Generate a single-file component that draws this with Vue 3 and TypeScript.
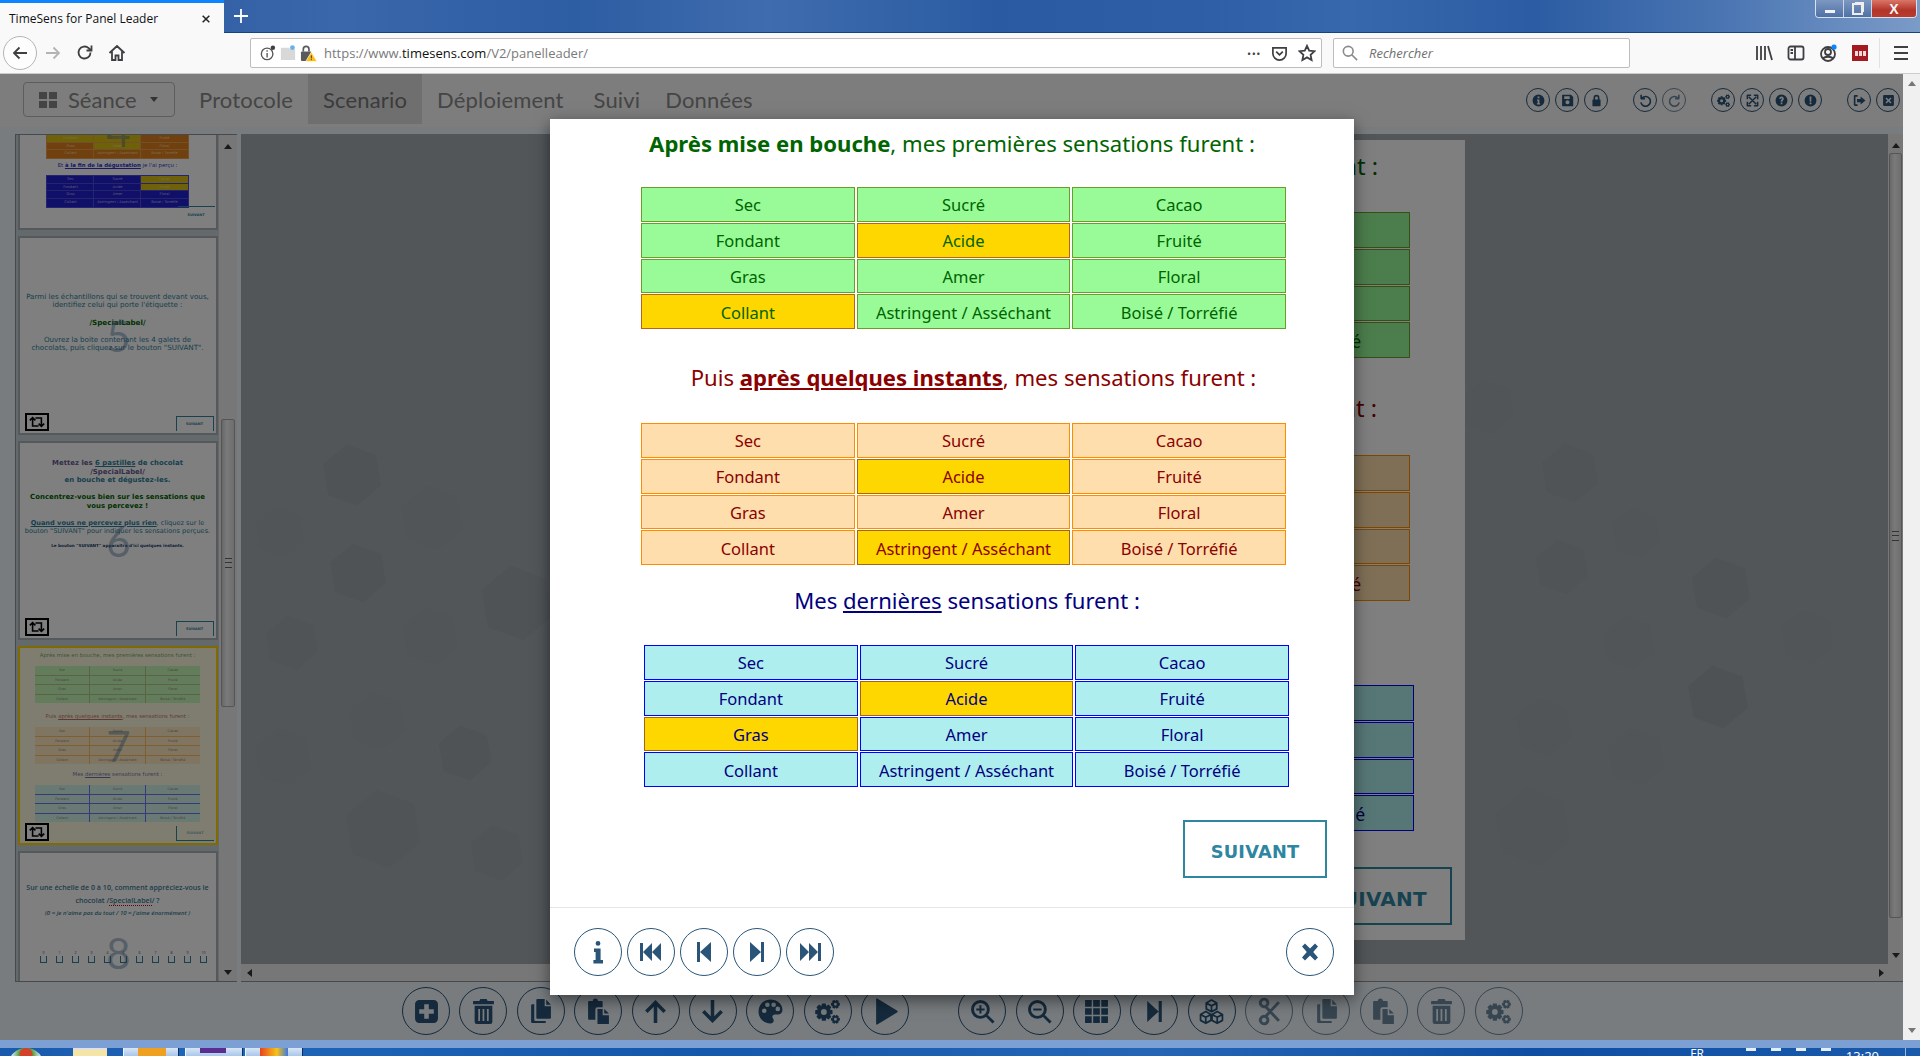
<script setup lang="ts">
type Icon = { d: string; stroke?: number }
type Theme = 'green' | 'peach' | 'blue'
type Tool = { icon: string; off?: boolean }

// roue dentée pour l'icône "cogs"
function gear(cx: number, cy: number, ro: number, ri: number, hole: number, n: number): string {
  const pts: string[] = []
  for (let i = 0; i < n; i++) {
    const a = (i / n) * Math.PI * 2
    const w = Math.PI / n
    const corners: [number, number][] = [
      [ri, a - w], [ro, a - w * 0.55], [ro, a + w * 0.55]
    ]
    corners.forEach(([r, t]) => {
      pts.push(`${(cx + r * Math.cos(t)).toFixed(2)} ${(cy + r * Math.sin(t)).toFixed(2)}`)
    })
  }
  return `M${pts.join('L')}Z M${cx - hole} ${cy}a${hole} ${hole} 0 1 0 ${hole * 2} 0a${hole} ${hole} 0 1 0 ${-hole * 2} 0Z`
}

const disc = 'M12 1a11 11 0 1 1 0 22a11 11 0 0 1 0-22Z '
const cogs = gear(8.5, 12.5, 8.5, 6.2, 2.8, 8) + ' ' + gear(19.6, 5, 4.4, 3.2, 1.4, 6) + ' ' + gear(19.6, 19.5, 4.4, 3.2, 1.4, 6)

const icons: Record<string, Icon> = {
  info: { d: 'M9.6 3.4a2.4 2.4 0 1 1 4.8 0a2.4 2.4 0 0 1-4.8 0Z M8 8.5h6.6v11.5H17v3.5H7.4V20h2.2v-8H8Z' },
  first: { d: 'M1 3h3v18H1Z M4 12l9-9v18Z M13 12l9-9v18Z' },
  prev: { d: 'M5 2h3v20H5Z M8 12 19 2v20Z' },
  next: { d: 'M5 2l11 10L5 22Z M16 2h3v20h-3Z' },
  last: { d: 'M2 3l9 9-9 9Z M11 3l9 9-9 9Z M20 3h3v18h-3Z' },
  close: { d: 'M4 6.5 7 3.5 12 8.5 17 3.5 20 6.5 15.2 12 20 17.5 17 20.5 12 15.5 7 20.5 4 17.5 8.8 12Z' },
  plusSquare: { d: 'M5 1h14a4 4 0 0 1 4 4v14a4 4 0 0 1-4 4H5a4 4 0 0 1-4-4V5a4 4 0 0 1 4-4Z M9.8 5v4.8H5v4.4h4.8V19h4.4v-4.8H19V9.8h-4.8V5Z' },
  trash: { d: 'M9 0h6l1 2h6v3H2V2h6Z M3.5 6.5h17V22a2 2 0 0 1-2 2h-13a2 2 0 0 1-2-2Z M7 9.5V21h1.7V9.5Z M11.1 9.5V21h1.7V9.5Z M15.3 9.5V21H17V9.5Z' },
  copy: { d: 'M9 0h7v7h6v11a1 1 0 0 1-1 1H9a1 1 0 0 1-1-1V1a1 1 0 0 1 1-1Z M17.5 .5 22 5.5h-4.5Z M6 5v15a1 1 0 0 0 1 1h10v2H4a1 1 0 0 1-1-1V6a1 1 0 0 1 1-1Z' },
  paste: { d: 'M3 2h3.5a2.5 2.5 0 0 1 5 0H15a1 1 0 0 1 1 1v5h-5a2 2 0 0 0-2 2v10H3a1 1 0 0 1-1-1V3a1 1 0 0 1 1-1Z M11 9.5h5v6h6V24H11Z M17.5 9.5 22 14h-4.5Z' },
  up: { d: 'M12 1 22 11 19.6 13.4 13.7 7.5V23h-3.4V7.5L4.4 13.4 2 11Z' },
  down: { d: 'M12 23 2 13 4.4 10.6 10.3 16.5V1h3.4v15.5l5.9-5.9L22 13Z' },
  palette: { d: 'M12 .5C5.2.5 .5 5.5 .5 12S5.6 23.500 12 23.500c2 0 3.100-1.200 3.100-2.800 0-1.800-1.300-2.200-1.300-3.600 0-1.300 1-2.200 2.500-2.200H19c2.700 0 4.500-1.800 4.500-4.300C23.500 4.600 18.300.5 12 .5Z M6 13.500a2.200 2.200 0 1 1 0-4.400 2.200 2.200 0 0 1 0 4.400Z M9 7.700a2.200 2.200 0 1 1 0-4.400 2.200 2.200 0 0 1 0 4.400Z M15 7.700a2.200 2.200 0 1 1 0-4.400 2.200 2.200 0 0 1 0 4.400Z M19 11.700a2.200 2.200 0 1 1 0-4.400 2.200 2.200 0 0 1 0 4.400Z' },
  cogs: { d: cogs },
  play: { d: 'M3 0a1 1 0 0 1 1.500-.3L23 11a1.200 1.200 0 0 1 0 2L4.500 24.300A1 1 0 0 1 3 24Z' },
  zoomIn: { d: 'M10 1a9 9 0 1 1 0 18a9 9 0 0 1 0-18Z M10 3.800a6.200 6.200 0 1 0 0 12.400a6.200 6.200 0 0 0 0-12.400Z M17.200 15.400 23.600 21.600 21.600 23.600 15.400 17.200Z M9 6h2v3h3v2h-3v3H9v-3H6V9h3Z' },
  zoomOut: { d: 'M10 1a9 9 0 1 1 0 18a9 9 0 0 1 0-18Z M10 3.800a6.200 6.200 0 1 0 0 12.400a6.200 6.200 0 0 0 0-12.400Z M17.200 15.400 23.600 21.600 21.600 23.600 15.400 17.200Z M6 9h8v2H6Z' },
  grid: { d: 'M1 1h6.400v6.400H1Z M8.800 1h6.400v6.400H8.800Z M16.600 1H23v6.400h-6.400Z M1 8.800h6.400v6.400H1Z M8.800 8.800h6.400v6.400H8.800Z M16.600 8.800H23v6.400h-6.400Z M1 16.600h6.400V23H1Z M8.800 16.600h6.400V23H8.800Z M16.600 16.600H23V23h-6.400Z' },
  cubes: { d: 'M12 1 17 3.800V9.500L12 12.300 7 9.500V3.800Z M7 3.800 12 6.600 17 3.800 M12 6.600V12.300 M6.500 12 11.500 14.800V20.500L6.500 23.300 1.500 20.500V14.800Z M1.500 14.800 6.500 17.600 11.500 14.800 M6.500 17.600V23.300 M17.500 12 22.500 14.800V20.500L17.500 23.300 12.500 20.500V14.800Z M12.500 14.800 17.500 17.600 22.500 14.800 M17.500 17.600V23.300', stroke: 1.7 },
  scissors: { d: 'M4 1.500a3.600 3.600 0 1 1 4.500 5.400A3.600 3.600 0 0 1 4 1.500Z M4 22.500a3.600 3.600 0 1 0 4.500-5.400A3.600 3.600 0 0 0 4 22.500Z M8 7 21 21 M8 17 21 3', stroke: 2.8 },
  infoDisc: { d: disc + 'M10.300 4.800h3.400V8h-3.400Z M9.300 10h4.400v7h1.300v2.400H9v-2.400h1.400v-4.600H9.300Z' },
  save: { d: 'M3 1.500h15.500L22.500 5.500V21.500a1 1 0 0 1-1 1H3a1 1 0 0 1-1-1V2.500a1 1 0 0 1 1-1Z M6 4v5h10V4Z M12 11.500a3.800 3.800 0 1 0 0 7.600a3.800 3.800 0 0 0 0-7.600Z' },
  lock: { d: 'M6.500 10V7a5.500 5.500 0 0 1 11 0v3h1a1 1 0 0 1 1 1v10.500a1 1 0 0 1-1 1h-13a1 1 0 0 1-1-1V11a1 1 0 0 1 1-1Z M9.500 10h5V7a2.500 2.500 0 0 0-5 0Z' },
  undo: { d: 'M5.500 7.500A9 9 0 1 1 3.400 15.500 M4 1.500V8.500H11', stroke: 3 },
  redo: { d: 'M18.500 7.500A9 9 0 1 0 20.600 15.500 M20 1.500V8.500H13', stroke: 3 },
  expand: { d: 'M5 5 19 19 M19 5 5 19 M2.500 9.500V2.500H9.500 M14.500 2.500H21.500V9.500 M21.500 14.500V21.500H14.500 M9.500 21.500H2.500V14.500', stroke: 2.8 },
  question: { d: disc + 'M7.800 9a4.200 4.200 0 0 1 8.400 0c0 2.500-2.600 2.900-2.600 4.700v.5h-3.100v-1c0-2.600 2.500-3 2.500-4.300a1 1 0 0 0-2.100 0Z M10.500 15.800h3.100v3h-3.100Z' },
  alert: { d: disc + 'M10.200 4.800h3.600l-.5 9.400h-2.600Z M10.300 15.600h3.400v3.300h-3.400Z' },
  signOut: { d: 'M1.500 4a2 2 0 0 1 2-2h5v3.200h-4v13.600h4V22h-5a2 2 0 0 1-2-2Z M14 4.500 23 12l-9 7.500v-4.500H7.500V9H14Z' },
  closeSquare: { d: 'M4 2h16a2 2 0 0 1 2 2v16a2 2 0 0 1-2 2H4a2 2 0 0 1-2-2V4a2 2 0 0 1 2-2Z M8.500 6.500 6.500 8.500 10 12 6.500 15.500 8.500 17.500 12 14 15.500 17.500 17.500 15.500 14 12 17.500 8.500 15.500 6.500 12 10Z' }
}

const navItems = ['Protocole', 'Scenario', 'Déploiement', 'Suivi', 'Données']
const navTools: Tool[][] = [
  [{ icon: 'infoDisc' }, { icon: 'save' }, { icon: 'lock' }],
  [{ icon: 'undo' }, { icon: 'redo', off: true }],
  [{ icon: 'cogs' }, { icon: 'expand' }, { icon: 'question' }, { icon: 'alert' }],
  [{ icon: 'signOut' }, { icon: 'closeSquare' }]
]
const bottomTools: Tool[][] = [
  ['plusSquare', 'trash', 'copy', 'paste', 'up', 'down', 'palette', 'cogs', 'play'].map((icon) => ({ icon })),
  [
    { icon: 'zoomIn' }, { icon: 'zoomOut' }, { icon: 'grid' }, { icon: 'next' }, { icon: 'cubes' },
    { icon: 'scissors', off: true }, { icon: 'copy', off: true }, { icon: 'paste', off: true },
    { icon: 'trash', off: true }, { icon: 'cogs', off: true }
  ]
]

const words = ['Sec', 'Sucré', 'Cacao', 'Fondant', 'Acide', 'Fruité', 'Gras', 'Amer', 'Floral', 'Collant', 'Astringent / Asséchant', 'Boisé / Torréfié']

const sections: { theme: Theme; picked: number[] }[] = [
  { theme: 'green', picked: [4, 9] },
  { theme: 'peach', picked: [4, 10] },
  { theme: 'blue', picked: [4, 6] }
]

// galets à peine visibles dans le fond de la scène : x, y, rayon, opacité
const shapes = [
  [352, 475, 31, .03], [280, 532, 26, .006], [432, 518, 33, .008], [358, 573, 30, .025], [292, 643, 28, .012],
  [430, 636, 30, .008], [517, 603, 38, .025], [377, 721, 30, .006], [283, 757, 30, .006], [465, 753, 28, .03],
  [383, 829, 40, .012], [497, 853, 28, .02], [1488, 407, 28, .006], [1570, 473, 30, .02], [1636, 533, 26, .008],
  [1562, 567, 28, .016], [1721, 588, 31, .03], [1807, 637, 28, .008], [1629, 643, 28, .008], [1718, 697, 32, .035],
  [1544, 727, 30, .008], [1636, 757, 30, .006], [1533, 827, 40, .008]
]
const hexPoints = (x: number, y: number, r: number) =>
  Array.from({ length: 6 }, (_, i) => {
    const a = (i / 6) * Math.PI * 2 + 0.35
    return `${(x - 241 + r * Math.cos(a)).toFixed(1)},${(y - 134 + r * Math.sin(a)).toFixed(1)}`
  }).join(' ')

const scale = [0, 1, 2, 3, 4, 5, 6, 7, 8, 9, 10]
</script>

<template>
  <div class="screen">
    <header class="titlebar">
      <div class="tab">
        <span class="tab-title">TimeSens for Panel Leader</span>
        <svg class="tab-x" viewBox="0 0 12 12"><path d="M2 2 10 10M10 2 2 10" /></svg>
      </div>
      <svg class="new-tab" viewBox="0 0 14 14"><path d="M7 0v14M0 7h14" /></svg>
      <div class="win-btns">
        <span class="win-btn win-min"><i /></span>
        <span class="win-btn win-max"><i /></span>
        <span class="win-btn win-close">X</span>
      </div>
    </header>

    <div class="toolbar">
      <span class="round-back">
        <svg viewBox="0 0 18 18" class="tb-icon"><path d="M16 9H3M8.500 3.500 3 9l5.500 5.500" /></svg>
      </span>
      <svg viewBox="0 0 18 18" class="tb-icon tb-forward"><path d="M2 9h13M9.500 3.500 15 9l-5.500 5.500" /></svg>
      <svg viewBox="0 0 18 18" class="tb-icon tb-reload"><path d="M14.500 8.500a6 6 0 1 1-1.800-4.300L15 6.500M15.500 1.500v5h-5" /></svg>
      <svg viewBox="0 0 18 18" class="tb-icon tb-home"><path d="M1.500 9 9 2l7.500 7M4 7.500V16h3.500v-4.500h3V16H14V7.500" /></svg>

      <div class="urlbar">
        <svg viewBox="0 0 18 18" class="tb-icon url-info"><circle cx="8" cy="10" r="6.500" /><path d="M8 9v5M8 6v1.500" /><circle class="dot-dark" cx="14.500" cy="3" r="2.500" /></svg>
        <svg viewBox="0 0 18 18" class="url-track"><path d="M1 3h9l2 2h5v12H1Z" /><circle cx="14" cy="3" r="2.700" /></svg>
        <svg viewBox="0 0 18 18" class="url-lock">
          <rect x="1" y="7" width="11" height="10" rx="1" fill="#5a5a5a" />
          <path d="M3.500 7V4.500a3 3 0 0 1 6 0V7" fill="none" stroke="#5a5a5a" stroke-width="1.800" />
          <path d="M12 7.500 18 17.500H6Z" fill="#fdbd12" stroke="#fff" stroke-width=".7" />
          <path d="M12 11v3.200M12 15v1" stroke="#333" stroke-width="1" />
        </svg>
        <span class="url-text">https://www.<b>timesens.com</b>/V2/panelleader/</span>
        <span class="url-dots">•••</span>
        <svg viewBox="0 0 18 18" class="tb-icon url-pocket"><path d="M2 3h14v6a7 7 0 0 1-14 0ZM5.500 7 9 10.500 12.500 7" /></svg>
        <svg viewBox="0 0 18 18" class="tb-icon url-star"><path d="M9 1.800 11.200 6.600 16.500 7.200 12.600 10.800 13.600 16 9 13.400 4.400 16 5.400 10.800 1.500 7.200 6.800 6.600Z" /></svg>
      </div>

      <div class="searchbar">
        <svg viewBox="0 0 18 18" class="search-glass"><circle cx="7" cy="7" r="5.500" /><path d="M11 11l6 6" /></svg>
        <span>Rechercher</span>
      </div>

      <svg viewBox="0 0 18 18" class="tb-icon tb-lib"><path d="M2 2v14M6 2v14M10 2v14M13 2l4 14" /></svg>
      <svg viewBox="0 0 18 18" class="tb-icon tb-side"><rect x="1.500" y="2.500" width="15" height="13" rx="2" /><path d="M8 2.500v13M3.500 6H6M3.500 9H6" /></svg>
      <svg viewBox="0 0 18 18" class="tb-icon tb-acc"><circle cx="9" cy="10" r="7" /><circle cx="9" cy="8" r="3" /><path d="M4 15c1-3 9-3 10 0" /><circle class="dot-blue" cx="15" cy="3" r="2.600" /></svg>
      <span class="tb-ext"><i /><i /><i /></span>
      <span class="tb-sep" />
      <svg viewBox="0 0 18 18" class="tb-icon tb-menu"><path d="M2 3h14M2 9h14M2 15h14" /></svg>
    </div>

    <div class="viewport">
      <div class="page">
        <nav class="nav">
          <div class="session">
            <span class="session-grid"><i /><i /><i /><i /></span>
            <span>Séance</span>
            <i class="caret" />
          </div>
          <a v-for="item in navItems" :key="item" class="nav-item" :class="{ 'nav-item--on': item === 'Scenario' }">{{ item }}</a>
          <div class="nav-tools">
            <div v-for="(group, g) in navTools" :key="g" class="nav-group">
              <span v-for="tool in group" :key="tool.icon" class="circle circle--sm" :class="{ 'circle--off': tool.off }">
                <svg viewBox="0 0 24 24" :class="{ lined: icons[tool.icon].stroke }" :stroke-width="icons[tool.icon].stroke"><path :d="icons[tool.icon].d" /></svg>
              </span>
            </div>
          </div>
        </nav>

        <main class="work">
          <aside class="slides">
            <div class="slides-list">
              <div class="slides-inner">
                <section class="thumb thumb--four">
                  <div class="mini mini--orange">
                    <span v-for="(w, i) in words.slice(3)" :key="w" :class="{ gold: [0, 1, 4].includes(i) }">{{ w }}</span>
                  </div>
                  <p class="t-head t-blue">Et <b><u>à la fin de la dégustation</u></b> je l'ai perçu :</p>
                  <div class="mini mini--navy">
                    <span v-for="(w, i) in words" :key="w" :class="{ gold: [2, 5].includes(i) }">{{ w }}</span>
                  </div>
                  <span class="t-next t-next--open">SUIVANT</span>
                  <em class="big">4</em>
                </section>

                <section class="thumb thumb--five">
                  <p class="t-text">Parmi les échantillons qui se trouvent devant vous,<br />identifiez celui qui porte l'étiquette :</p>
                  <p class="t-text t-label">/SpecialLabel/</p>
                  <p class="t-text">Ouvrez la boite contenant les 4 galets de<br />chocolats, puis cliquez sur le bouton "SUIVANT".</p>
                  <span class="t-repeat"><svg viewBox="0 0 20 14"><path d="M1 5 4.500 1.500 8 5M4.500 2v10H12M19 9l-3.500 3.500L12 9M15.500 12V2H8" /></svg></span>
                  <span class="t-next">SUIVANT</span>
                  <em class="big">5</em>
                </section>

                <section class="thumb thumb--six">
                  <p class="t-text t-strong"><span class="t-plum">Mettez les</span> <u>6 pastilles</u> de chocolat<br /><span class="t-plum">/SpecialLabel/</span><br />en bouche et dégustez-les.</p>
                  <p class="t-text t-strong t-green t-gap">Concentrez-vous bien sur les sensations que<br />vous percevez !</p>
                  <p class="t-text t-gap t-tight"><b><u>Quand vous ne percevez plus rien</u></b>, cliquez sur le<br />bouton "SUIVANT" pour indiquer les sensations perçues.</p>
                  <p class="t-note">Le bouton "SUIVANT" apparaîtra d'ici quelques instants.</p>
                  <span class="t-repeat"><svg viewBox="0 0 20 14"><path d="M1 5 4.500 1.500 8 5M4.500 2v10H12M19 9l-3.500 3.500L12 9M15.500 12V2H8" /></svg></span>
                  <span class="t-next">SUIVANT</span>
                  <em class="big">6</em>
                </section>

                <section class="thumb thumb--seven">
                  <div class="seven-body">
                    <p class="s-head s-head--green">Après mise en bouche, mes premières sensations furent :</p>
                    <div class="mini mini--seven mini--green"><span v-for="w in words" :key="w">{{ w }}</span></div>
                    <p class="s-head s-head--red">Puis <u>après quelques instants</u>, mes sensations furent :</p>
                    <div class="mini mini--seven mini--peach"><span v-for="w in words" :key="w">{{ w }}</span></div>
                    <p class="s-head s-head--blue">Mes <u>dernières</u> sensations furent :</p>
                    <div class="mini mini--seven mini--aqua"><span v-for="w in words" :key="w">{{ w }}</span></div>
                  </div>
                  <span class="t-repeat"><svg viewBox="0 0 20 14"><path d="M1 5 4.500 1.500 8 5M4.500 2v10H12M19 9l-3.500 3.500L12 9M15.500 12V2H8" /></svg></span>
                  <span class="t-next t-next--low">SUIVANT</span>
                  <em class="big">7</em>
                </section>

                <section class="thumb thumb--eight">
                  <p class="t-sans">Sur une échelle de 0 à 10, comment appréciez-vous le<br />chocolat /<span class="squiggle">SpecialLabel</span>/ ?</p>
                  <p class="t-sans-note">(0 = je n'aime pas du tout / 10 = j'aime énormément )</p>
                  <div class="rating">
                    <div v-for="n in scale" :key="n" class="rating-item"><small>{{ n }}</small><i /></div>
                  </div>
                  <em class="big">8</em>
                </section>
              </div>
            </div>
            <div class="vbar vbar--slides">
              <i class="arr arr--up" />
              <span class="vthumb"><b /></span>
              <i class="arr arr--down" />
            </div>
          </aside>

          <div class="stage">
            <div class="stage-row">
              <div class="canvas">
                <svg class="bg-shapes" width="1647" height="830">
                  <polygon v-for="(s, i) in shapes" :key="i" :points="hexPoints(s[0], s[1], s[2])" :fill-opacity="s[3]" />
                </svg>
                <div class="slide">
                  <template v-for="(sec, si) in sections" :key="sec.theme">
                    <h2 class="slide-title" :class="[`title-${sec.theme}`, `slide-title--${si}`]">
                      <template v-if="si === 0"><b>Après mise en bouche</b>, mes premières sensations furent :</template>
                      <template v-else-if="si === 1">Puis <b><u>après quelques instants</u></b>, mes sensations furent :</template>
                      <template v-else>Mes <u>dernières</u> sensations furent :</template>
                    </h2>
                    <div class="cells cells--stage" :class="[`cells--${sec.theme}`, `cells--stage${si}`]">
                      <span v-for="(w, i) in words" :key="w" class="cell" :class="{ 'cell--on': sec.picked.includes(i) }">{{ w }}</span>
                    </div>
                  </template>
                  <div class="next-wrap next-wrap--stage"><button type="button" class="next next--stage">SUIVANT</button></div>
                </div>
              </div>
              <div class="vbar vbar--stage">
                <i class="arr arr--up" />
                <span class="vthumb vthumb--stage"><b /></span>
                <i class="arr arr--down" />
              </div>
            </div>
            <div class="hbar"><i class="arr arr--left" /><i class="arr arr--right" /></div>
          </div>
        </main>

        <footer class="tools">
          <div v-for="(group, g) in bottomTools" :key="g" class="tools-group">
            <span v-for="tool in group" :key="tool.icon + g" class="circle" :class="{ 'circle--off': tool.off }">
              <svg viewBox="0 0 24 24" :class="{ lined: icons[tool.icon].stroke }" :stroke-width="icons[tool.icon].stroke"><path :d="icons[tool.icon].d" /></svg>
            </span>
          </div>
        </footer>

        <div class="backdrop">
          <div class="modal">
            <div class="modal-body">
              <template v-for="(sec, si) in sections" :key="sec.theme">
                <h2 class="title" :class="[`title-${sec.theme}`, `title--${si}`]">
                  <template v-if="si === 0"><b>Après mise en bouche</b>, mes premières sensations furent :</template>
                  <template v-else-if="si === 1">Puis <b><u>après quelques instants</u></b>, mes sensations furent :</template>
                  <template v-else>Mes <u>dernières</u> sensations furent :</template>
                </h2>
                <div class="cells" :class="[`cells--${sec.theme}`, `cells--m${si}`]">
                  <span v-for="(w, i) in words" :key="w" class="cell" :class="{ 'cell--on': sec.picked.includes(i) }">{{ w }}</span>
                </div>
              </template>
              <div class="next-wrap"><button type="button" class="next">SUIVANT</button></div>
            </div>
            <div class="modal-foot">
              <div class="foot-left">
                <span v-for="name in ['info', 'first', 'prev', 'next', 'last']" :key="name" class="circle circle--light">
                  <svg viewBox="0 0 24 24"><path :d="icons[name].d" /></svg>
                </span>
              </div>
              <span class="circle circle--light">
                <svg viewBox="0 0 24 24"><path :d="icons.close.d" /></svg>
              </span>
            </div>
          </div>
        </div>
      </div>

      <div class="page-scroll">
        <i class="arr arr--up arr--page" />
        <i class="arr arr--down arr--page" />
      </div>
    </div>

    <div class="strip" />
    <div class="taskbar">
      <span class="orb" />
      <span class="task task--folder"><i /></span>
      <span class="task task--box task--one"><i /></span>
      <span class="task task--box task--two"><i /></span>
      <span class="task task--box task--three"><i /></span>
      <span class="tray">
        <span class="tray-lang">FR</span>
        <i /><i /><i /><i />
        <span class="clock">13:20</span>
      </span>
      <span class="show-desktop" />
    </div>
  </div>
</template>

<style>
html, body { margin: 0; height: 100%; overflow: hidden; background: #fff; }
</style>

<style scoped>
.screen { width: 1920px; height: 1056px; overflow: hidden; display: flex; flex-direction: column; font-family: "Open Sans", "Liberation Sans", sans-serif; }
p, h2 { margin: 0; font-weight: normal; }

/* ---- barre de titre ---- */
.titlebar { height: 33px; flex: none; display: flex; box-sizing: border-box; border-bottom: 1px solid #17437f; background: linear-gradient(90deg, #2a5aa0 0, #3a66ab 18%, #2d5da3 30%, #3f6cae 40%, #2a5ba2 52%, #2d5ea6 62%, #3768ad 70%, #2c5ca3 80%, #4b76b3 90%, #7b9bc8 100%); }
.tab { width: 224px; height: 33px; box-sizing: border-box; background: #f9f9fa; border-top: 3px solid #0a84ff; display: flex; align-items: center; font-size: 12px; color: #111; padding-left: 9px; }
.tab-title { width: 192px; font-family: "Open Sans", sans-serif; font-size: 12px; }
.tab-x { width: 10px; height: 10px; margin-top: 1px; }
.tab-x path { stroke: #222; stroke-width: 1.800; fill: none; }
.new-tab { width: 14px; height: 14px; margin: 9px 0 0 10px; }
.new-tab path { stroke: #fff; stroke-width: 1.800; fill: none; }
.win-btns { margin-left: auto; margin-right: 3px; display: flex; height: 18px; border: 1px solid #d6e0ee; border-top: none; border-radius: 0 0 4px 4px; overflow: hidden; box-sizing: border-box; width: 102px; }
.win-btn { display: flex; align-items: center; justify-content: center; border-right: 1px solid #c9d4e6; }
.win-min { width: 27px; background: linear-gradient(#7d98c1, #4f71a5); }
.win-min i { width: 10px; height: 3px; margin-top: 5px; background: #f2f2f2; }
.win-max { width: 27px; background: linear-gradient(#7d98c1, #4f71a5); }
.win-max i { width: 7px; height: 8px; border: 2px solid #eee; box-shadow: 2px -2px 0 -1px #eee; }
.win-close { flex: 1; border: none; background: linear-gradient(#d97667, #b3342a 60%, #b93a2e); color: #f4f4f4; font: bold 14px "Liberation Sans", sans-serif; }

/* ---- barre d'outils navigateur ---- */
.toolbar { height: 41px; flex: none; display: flex; align-items: center; box-sizing: border-box; background: #f9f9fa; border-bottom: 1px solid #ccc; }
.tb-icon { width: 18px; height: 18px; flex: none; }
.tb-icon path, .tb-icon circle, .tb-icon rect { fill: none; stroke: #3f3f41; stroke-width: 1.800; }
.tb-icon .dot-dark { fill: #3f3f41; stroke: none; }
.tb-icon .dot-blue { fill: #0a84ff; stroke: none; }
.round-back { width: 34px; height: 34px; margin-left: 3px; border: 1px solid #b5b5b5; border-radius: 50%; box-sizing: border-box; display: flex; align-items: center; justify-content: center; background: #fdfdfd; }
.tb-forward { margin-left: 7px; }
.tb-forward path { stroke: #b4b4b4; }
.tb-reload { margin-left: 14px; }
.tb-home { margin-left: 14px; }
.urlbar { width: 1072px; height: 30px; margin-left: 124px; box-sizing: border-box; border: 1px solid #bdbdbd; border-radius: 2px; background: #fff; display: flex; align-items: center; flex: none; }
.url-info { margin-left: 9px; width: 16px; height: 16px; }
.url-info path, .url-info circle { stroke-width: 1.500; stroke: #555; }
.url-track { width: 16px; height: 16px; margin-left: 4px; }
.url-track path { fill: #d8d8d8; }
.url-track circle { fill: #6bb0ea; }
.url-lock { width: 17px; height: 17px; margin-left: 4px; }
.url-text { margin-left: 7px; font-size: 13px; color: #7a7a7a; white-space: nowrap; }
.url-text b { font-weight: normal; color: #111; }
.url-dots { margin-left: auto; font-size: 11px; letter-spacing: .5px; color: #444; }
.url-pocket { margin-left: 10px; width: 17px; height: 17px; }
.url-star { margin-left: 10px; margin-right: 5px; width: 18px; height: 18px; }
.searchbar { width: 297px; height: 30px; margin-left: 11px; box-sizing: border-box; border: 1px solid #bdbdbd; border-radius: 2px; background: #fff; display: flex; align-items: center; font-size: 13px; font-style: italic; color: #707070; flex: none; }
.search-glass { width: 16px; height: 16px; margin: 0 11px 0 8px; }
.search-glass circle, .search-glass path { fill: none; stroke: #8a8a8a; stroke-width: 1.800; }
.tb-lib { margin-left: 125px; }
.tb-side { margin-left: 14px; }
.tb-acc { margin-left: 14px; }
.tb-ext { width: 16px; height: 16px; margin-left: 15px; background: #a31b20; display: flex; align-items: center; justify-content: center; gap: 1px; flex: none; }
.tb-ext i { width: 3px; height: 5px; background: #f3d9d9; }
.tb-sep { width: 1px; height: 30px; background: #e2e2e2; margin-left: 11px; flex: none; }
.tb-menu { margin-left: 12px; }

/* ---- page sous le voile ---- */
.viewport { height: 966px; flex: none; display: flex; }
.page { position: relative; width: 1903px; flex: none; background: aliceblue; display: flex; flex-direction: column; overflow: hidden; }
.page-scroll { width: 17px; flex: none; background: #f0f0f0; display: flex; flex-direction: column; justify-content: space-between; align-items: center; padding: 7px 0; box-sizing: border-box; }

.nav { height: 53px; flex: none; box-sizing: border-box; display: flex; align-items: flex-start; background: #fafafa; font-family: Lato, "Open Sans", sans-serif; color: #8a8a8a; }
.session { width: 152px; height: 35px; margin: 8px 0 0 23px; box-sizing: border-box; border: 1px solid #bbb; border-radius: 4px; display: flex; align-items: center; font-size: 22px; padding-left: 15px; flex: none; }
.session-grid { display: grid; grid-template-columns: 8px 8px; grid-template-rows: 7px 7px; gap: 2px; margin-right: 11px; }
.session-grid i { background: #888; }
.caret { width: 0; height: 0; margin-left: 13px; border: 4.500px solid transparent; border-top: 5px solid #666; border-bottom: none; }
.nav-item { height: 50px; line-height: 52px; font-size: 22px; letter-spacing: .15px; padding: 0 15px; flex: none; box-sizing: border-box; }
.nav-item:first-of-type { margin-left: 9px; }
.nav-item:last-of-type { margin-left: -5px; }
.nav-item--on { background: #dfdfdf; color: #777; }
.nav-tools { margin-left: auto; margin-right: 3px; margin-top: 14px; display: flex; gap: 25px; }
.nav-group { display: flex; gap: 5px; }

.circle { width: 48px; height: 48px; box-sizing: border-box; border: 1px solid #2a5578; border-radius: 50%; display: flex; align-items: center; justify-content: center; flex: none; color: #2a5578; }
.circle svg { width: 25px; height: 25px; fill: currentColor; fill-rule: evenodd; overflow: visible; }
.circle svg.lined { fill: none; stroke: currentColor; stroke-linejoin: round; }
.circle--sm { width: 24px; height: 24px; }
.circle--sm svg { width: 13px; height: 13px; }
.circle--off { color: #6f8ba3; border-color: #6f8ba3; }
.circle--light { background: #fff; }

.work { height: 848px; flex: none; margin-top: 7px; display: flex; padding-left: 15px; gap: 4px; }
.tools { flex: 1; display: flex; padding-left: 402px; gap: 49px; padding-top: 5px; }
.tools-group { display: flex; gap: 9.400px; }

/* ---- liste de diapos ---- */
.slides { width: 222px; flex: none; box-sizing: border-box; border: 1px solid #8d9499; display: flex; }
.slides-list { width: 203px; flex: none; overflow: hidden; background: #c8d2d8; }
.slides-inner { display: flex; flex-direction: column; gap: 6px; margin-top: -104px; padding: 0 1.500px; }
.thumb { position: relative; height: 199px; flex: none; box-sizing: border-box; border: 2px solid #aab3b8; background: #fff; display: flex; flex-direction: column; align-items: center; color: #2e7f99; font-family: "DejaVu Sans", sans-serif; }
.thumb--four { justify-content: flex-start; padding-top: 102px; }
.thumb--five { padding-top: 55px; }
.thumb--six { padding-top: 16px; }
.thumb--seven { border-color: #ffd700; background: #fffbe0; }
.thumb--eight { height: 240px; padding-top: 28px; font-family: "Open Sans", sans-serif; }
.t-text { font-size: 7.150px; line-height: 8.300px; text-align: center; margin-bottom: 9px; white-space: nowrap; }
.t-label { color: #006400; font-weight: bold; }
.t-strong { font-size: 6.950px; font-weight: bold; margin-bottom: 8px; line-height: 8.700px; }
.t-plum { color: #6a5b90; }
.t-green { color: #006400; }
.t-gap { margin-bottom: 8px; }
.t-tight { font-size: 6.600px; }
.t-note { font-size: 4.200px; font-weight: bold; color: #1e3f6c; }
.t-head { font-size: 5.400px; margin: 4px 0 8px; }
.t-blue { color: #3333cc; }
.t-next { position: absolute; right: 2px; bottom: 2px; width: 38px; height: 15px; box-sizing: border-box; border: 1px solid #2e86a0; border-bottom: none; font-size: 3.500px; font-weight: bold; display: flex; align-items: center; justify-content: center; color: #2e7f99; }
.t-next--open { border-left: none; border-right: none; bottom: 6px; height: 16px; width: 37px; right: 1px; }
.t-next--low { border: 1px solid #2e86a0; border-top: none; border-right: none; color: #8fb4bf; }
.t-repeat { position: absolute; left: 5px; bottom: 2px; width: 24px; height: 18px; box-sizing: border-box; border: 2px solid #000; background: #fff; display: flex; align-items: center; justify-content: center; }
.t-repeat svg { width: 16px; height: 12px; fill: none; stroke: #000; stroke-width: 2; }
.big { position: absolute; left: 50%; top: 50%; transform: translate(-50%, -50%); margin-left: 1px; font: normal 42px Lato, "Open Sans", sans-serif; color: rgba(70, 110, 150, .45); }
.mini { display: grid; grid-template-columns: repeat(3, 1fr); width: 141px; font-size: 3.600px; color: #fff; text-align: center; }
.mini span { height: 7.700px; line-height: 7.700px; overflow: hidden; white-space: nowrap; }
.mini--orange span { background: #e0801c; color: #ffd9a0; outline: .5px solid #e8a050; }
.mini--navy span { background: #2020d0; color: #b8b8f0; outline: .5px solid #4848e0; }
.mini .gold { background: #dcc215; color: #f0e088; }
.seven-body { opacity: .55; display: flex; flex-direction: column; align-items: center; padding-top: 3px; }
.s-head { font-size: 5.400px; line-height: 8px; }
.s-head--green { color: #006400; margin-bottom: 7px; }
.s-head--red { color: #8b0000; margin: 9px 0 7px; }
.s-head--blue { color: #000080; margin: 6px 0 7px; }
.mini--seven { width: 165px; color: #222; gap: 1px; font-size: 3.400px; }
.mini--seven span { height: 8.500px; line-height: 8.500px; }
.mini--green span { background: #98fb98; }
.mini--peach span { background: #ffdead; }
.mini--aqua span { background: #afeeee; }
.mini--green { background: #789c3a; }
.mini--peach { background: #ff8c00; }
.mini--aqua { background: #0000ff; }
.t-sans { font-size: 7.100px; line-height: 12.500px; text-align: center; font-weight: 600; color: #3c7a90; }
.squiggle { border-bottom: 1px dotted #d00000; }
.t-sans-note { font-size: 6px; font-style: italic; font-weight: 600; margin-top: 3px; color: #3c7a90; }
.rating { display: flex; gap: 9.500px; margin: 32px 0 0 12px; }
.rating-item { width: 6.500px; display: flex; flex-direction: column; align-items: center; }
.rating-item small { font-size: 3.500px; line-height: 7px; color: #444; }
.rating-item i { width: 6.500px; height: 7px; box-sizing: border-box; border: 1px solid #2e7f99; border-top: none; }
.thumb--eight .big { top: 100px; }

.vbar { width: 18px; flex: none; background: #eee; display: flex; flex-direction: column; align-items: center; position: relative; }
.vbar--slides { padding-top: 9px; box-sizing: border-box; }
.vbar--stage { width: 15px; padding-top: 9px; box-sizing: border-box; }
.vthumb { width: 14px; height: 288px; margin-top: 270px; flex: none; box-sizing: border-box; border: 1px solid #aaa; border-radius: 2px; background: linear-gradient(90deg, #d0d0d0, #f4f4f4 40%, #dcdcdc); display: flex; align-items: center; justify-content: center; }
.vthumb b { width: 7px; height: 8px; border-top: 1px solid #666; border-bottom: 1px solid #666; background: linear-gradient(#0000 3px, #666 3px, #666 4px, #0000 4px); }
.vthumb--stage { width: 13px; height: 765px; margin-top: 5px; }
.arr { width: 0; height: 0; flex: none; border: 4px solid transparent; }
.arr--up { border-bottom: 5px solid #333; border-top: none; }
.arr--down { border-top: 5px solid #333; border-bottom: none; margin-top: auto; margin-bottom: 6px; }
.arr--left { border-right: 5px solid #333; border-left: none; }
.arr--right { border-left: 5px solid #333; border-right: none; margin-left: auto; margin-right: 19px; }
.arr--page { margin: 0; }
.arr--page.arr--up { border-bottom: 5px solid #777; }
.arr--page.arr--down { border-top: 5px solid #777; }

/* ---- scène centrale ---- */
.stage { flex: 1; min-width: 0; display: flex; flex-direction: column; }
.stage-row { flex: 1; min-height: 0; display: flex; }
.canvas { position: relative; flex: 1; min-width: 0; overflow: hidden; background: #a4acb2; }
.bg-shapes { position: absolute; left: 0; top: 0; }
.bg-shapes polygon { fill: #000; }
.hbar { height: 18px; flex: none; display: flex; align-items: center; background: #eee; padding-left: 6px; border-bottom: 1px solid #8d9499; box-sizing: border-box; }
.slide { position: relative; width: 802px; height: 800px; margin: 6px 0 0 422px; box-sizing: border-box; background: #fff; padding-top: 11px; display: flex; flex-direction: column; }
.slide-title { font: 23.500px/30px "Noto Sans", sans-serif; text-align: right; padding-right: 87px; white-space: nowrap; }
.slide-title--1 { margin-top: 35px; padding-right: 88px; }
.slide-title--2 { margin-top: 24px; padding-right: 200px; }

/* ---- voile + fenêtre ---- */
.backdrop { position: absolute; inset: 0; background: rgba(0, 0, 0, .5); }
.modal { width: 804px; height: 876px; margin: 45px 0 0 550px; background: #fff; box-shadow: 0 5px 15px rgba(0, 0, 0, .5); display: flex; flex-direction: column; }
.modal-body { flex: 1; min-height: 0; padding-top: 10px; box-sizing: border-box; }
.title { font: 22.100px/29px "Noto Sans", sans-serif; text-align: center; white-space: nowrap; }
.title-green { color: #006400; }
.title-peach { color: #8b0000; }
.title-blue { color: #000080; }
.title--1 { margin-top: 34px; padding-left: 43px; }
.title--2 { margin-top: 21px; padding-left: 30px; }
.cells { display: grid; grid-template-columns: repeat(3, 1fr); grid-template-rows: repeat(4, 1fr); column-gap: 2px; row-gap: 1px; width: 645px; height: 142px; margin: 29px 0 0 91px; font: 16.500px "Noto Sans", sans-serif; }
.cells--m1 { margin-top: 31px; }
.cells--m2 { margin: 30px 0 0 94px; }
.cell { box-sizing: border-box; display: flex; align-items: center; justify-content: center; border: 1px solid; white-space: nowrap; padding-top: 1px; }
.cells--green .cell { background: #98fb98; border-color: #6b9e28; color: #006400; }
.cells--green .cell--on { background: #ffd700; border-color: #b5651d; }
.cells--peach .cell { background: #ffdead; border-color: #ff8c00; color: #8b0000; }
.cells--peach .cell--on { background: #ffd700; border-color: #a0661a; }
.cells--blue .cell { background: #afeeee; border-color: #0000ff; color: #000080; }
.cells--blue .cell--on { background: #ffd700; border-color: #a0661a; }
.next-wrap { display: flex; justify-content: flex-end; margin-top: 33px; padding-right: 27px; }
.next { width: 144px; height: 58px; padding: 5px 0 0; box-sizing: border-box; background: transparent; border: 2px solid #2e86a0; color: #2e86a0; font: bold 17.800px "DejaVu Sans", sans-serif; letter-spacing: .2px; }
.modal-foot { height: 88px; flex: none; box-sizing: border-box; border-top: 1px solid #e5e5e5; display: flex; align-items: center; justify-content: space-between; padding: 0 20px 0 24px; }
.foot-left { display: flex; gap: 5px; }
.foot-left .circle svg, .modal-foot .circle svg { width: 24px; height: 24px; }

/* la diapo derrière le voile reprend les mêmes blocs, un peu plus grands */
.cells.cells--stage { width: 671px; height: 146px; margin: 31px 0 0 76px; font-size: 17.600px; }
.cells.cells--stage1 { margin-top: 32px; }
.cells.cells--stage2 { margin: 30px 0 0 80px; }
.next-wrap.next-wrap--stage { margin-top: 36px; padding-right: 13px; }
.next.next--stage { width: 146px; height: 58px; font-size: 20px; padding: 5px 4px 0 0; }

/* ---- barre des tâches ---- */
.strip { height: 8px; flex: none; background: #7ca0d4; }
.taskbar { height: 8px; flex: none; display: flex; overflow: hidden; background: linear-gradient(90deg, #1a5aad, #1f66b8 12%, #1458ab 35%, #2465b6 60%, #0e4fa3 80%, #1a5aad); position: relative; }
.orb { width: 36px; height: 36px; border-radius: 50%; margin: 0 0 0 8px; flex: none; background: radial-gradient(circle at 50% 18%, #d64028 0 6px, #5ea040 7px, #cfe4f7 14px); }
.task { flex: none; display: block; }
.task--folder { width: 34px; margin-left: 29px; background: #f4e4a6; border-top: 2px solid #e0e0e0; }
.task--box { background: linear-gradient(#d8e6f6, #a9c6ea); border-left: 1px solid #eef4fb; border-right: 1px solid #0c2f63; box-sizing: border-box; }
.task--one { width: 56px; margin-left: 16px; }
.task--one i { display: block; width: 28px; height: 8px; margin-left: 14px; background: #f0a020; }
.task--two { width: 58px; margin-left: 6px; }
.task--two i { display: block; width: 26px; height: 5px; margin: 0 0 0 14px; background: #5c2d91; }
.task--three { width: 58px; margin-left: 2px; }
.task--three i { display: block; width: 28px; height: 8px; margin-left: 14px; background: linear-gradient(90deg, #e8421e, #f7c21a 60%, #3b78e0); }
.tray { margin-left: auto; display: flex; align-items: flex-start; color: #fff; font-size: 13px; line-height: 12px; }
.tray-lang { margin-right: 42px; font-size: 12px; }
.tray i { width: 10px; height: 3px; margin-right: 15px; background: #e6eef8; }
.clock { margin: 2px 26px 0 0; }
.show-desktop { width: 14px; border-left: 1px solid #9db8dc; flex: none; }
</style>
